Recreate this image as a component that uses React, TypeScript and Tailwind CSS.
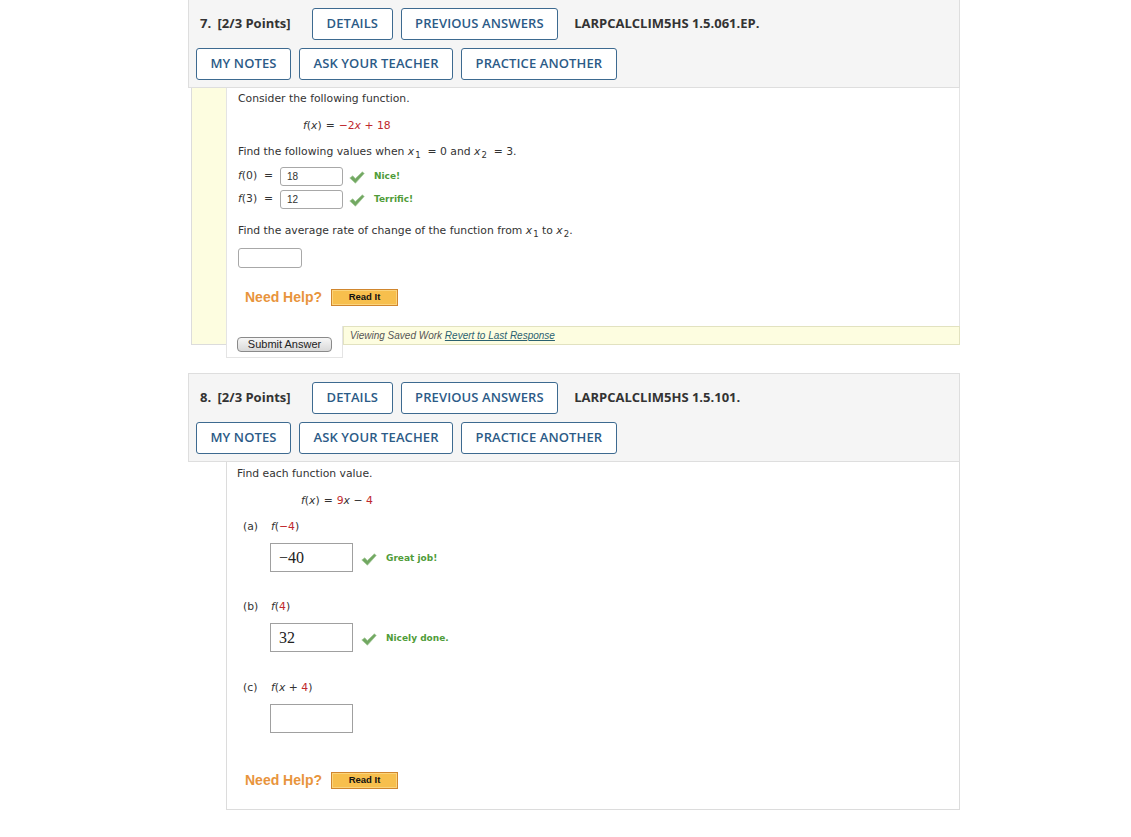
import React from "react";

const hdrFont = { fontFamily: '"Open Sans", "Liberation Sans", sans-serif' };

function Btn({ children }: { children: React.ReactNode }) {
  return (
    <div className="h-[32px] px-[13.5px] flex items-center border-[1.5px] border-[#3d6a90] rounded-[3px] bg-white text-[#2c5b87] text-[13px] font-semibold tracking-[0.1px]">
      {children}
    </div>
  );
}

function Header({ num, code, top }: { num: string; code: string; top?: boolean }) {
  return (
    <div
      className={`ml-[188px] w-[772px] bg-[#f5f5f5] border border-[#dedede] ${top ? "border-t-0 pt-[8px]" : "pt-[8px]"} pb-[7px]`}
      style={hdrFont}
    >
      <div className="flex items-center h-[32px]">
        <div className="w-[123px] pl-[11px] text-[13px] font-bold text-[#333]">
          {num}. <span className="ml-[3px]">[2/3 Points]</span>
        </div>
        <Btn>DETAILS</Btn>
        <div className="w-[8px]" />
        <Btn>PREVIOUS ANSWERS</Btn>
        <div className="ml-[16px] text-[13px] font-bold text-[#333]">{code}</div>
      </div>
      <div className="flex items-center h-[32px] mt-[8px] pl-[7px] gap-[8px]">
        <Btn>MY NOTES</Btn>
        <Btn>ASK YOUR TEACHER</Btn>
        <Btn>PRACTICE ANOTHER</Btn>
      </div>
    </div>
  );
}

function Check() {
  return (
    <svg width="16" height="13" viewBox="0 0 16 13">
      <path d="M0.8 7 L3.8 4.8 L6.3 7.6 L13.4 0.8 L15.2 2.6 L6.4 12.2 Z" fill="#72a862" stroke="#a2c896" strokeWidth="0.7" />
    </svg>
  );
}

const red = "text-[#c0282d]";

function NeedHelp({ ml }: { ml: string }) {
  return (
    <div className={`flex items-center h-[18px] ${ml}`}>
      <span className="text-[14px] font-bold text-[#e8943c]" style={{ fontFamily: '"Liberation Sans", Arial, sans-serif' }}>
        Need Help?
      </span>
      <div
        className="ml-[9px] w-[67px] h-[17px] flex items-center justify-center bg-[#f7bf4d] border border-[#d0862e] shadow-[inset_0_0_0_1px_#fbd47c] text-[9.5px] font-bold text-[#111]"
        style={{ fontFamily: '"Liberation Sans", Arial, sans-serif' }}
      >
        Read It
      </div>
    </div>
  );
}

const bodyFont = { fontFamily: '"DejaVu Sans", Verdana, sans-serif' };

function Sub({ children }: { children: React.ReactNode }) {
  return <span className="inline-block text-[8.5px] translate-y-[3px] ml-[1px]">{children}</span>;
}

export default function App() {
  return (
    <div className="w-[1131px] h-[837px] bg-white overflow-hidden">
      <Header num="7" code="LARPCALCLIM5HS 1.5.061.EP." top />
      {/* Q7 body */}
      <div className="ml-[191px] w-[769px] flex items-start text-[10.8px] text-[#333]" style={bodyFont}>
        <div className="w-[35px] h-[257px] bg-[#fdfde0] border-l border-b border-[#dcdcdc]" />
        <div className="flex-1">
          <div className="h-[238px] bg-white border-l border-r border-[#e4e4e4] pl-[11px] pt-[4px]">
            <div className="h-[14px] flex items-center">Consider the following function.</div>
            <div className="h-[14px] flex items-center mt-[13px] ml-[65px] whitespace-pre">
              <i>f</i>(<i>x</i>)<span className="px-[4px]">=</span><span className={red}>−2<i>x</i> + 18</span>
            </div>
            <div className="h-[14px] flex items-center mt-[12px] whitespace-pre">
              Find the following values when <i>x</i><Sub>1</Sub>{"  = 0 and "}<i>x</i><Sub>2</Sub>{"  = 3."}
            </div>
            {[
              ["0", "18", "Nice!", "mt-[8px]"],
              ["3", "12", "Terrific!", "mt-[4px]"],
            ].map(([a, v, fb, mt]) => (
              <div key={a} className={`h-[19px] flex items-center ${mt}`}>
                <span className="w-[42px] whitespace-pre">
                  <i>f</i>({a}){"  ="}
                </span>
                <div
                  className="w-[63px] h-[19px] border border-[#a8a8a8] rounded-[3px] flex items-center pl-[6px] text-[10px] text-[#333]"
                  style={{ fontFamily: '"Liberation Sans", Arial, sans-serif' }}
                >
                  {v}
                </div>
                <div className="ml-[6px] mt-[1px]">
                  <Check />
                </div>
                <span className="ml-[9px] font-bold text-[9px] text-[#4f9c39]">{fb}</span>
              </div>
            ))}
            <div className="h-[14px] flex items-center mt-[15px] whitespace-pre">
              Find the average rate of change of the function from <i>x</i><Sub>1</Sub> to <i>x</i><Sub>2</Sub>.
            </div>
            <div className="mt-[10px] w-[64px] h-[20px] border border-[#a8a8a8] rounded-[3px]" />
            <div className="mt-[20px]">
              <NeedHelp ml="ml-[7px]" />
            </div>
          </div>
          <div className="flex items-start">
            <div className="w-[117px] h-[32px] bg-white border-l border-r border-b border-[#e4e4e4] pl-[10px] pt-[11px]">
              <div
                className="w-[95px] h-[15px] rounded-[4px] border border-[#8a8a8a] bg-gradient-to-b from-[#f6f6f6] to-[#d9d9d9] flex items-center justify-center text-[11px] text-[#222]"
                style={{ fontFamily: '"Liberation Sans", Arial, sans-serif' }}
              >
                Submit Answer
              </div>
            </div>
            <div
              className="flex-1 h-[19px] bg-[#fdfde0] border border-[#e2e2c0] flex items-center pl-[6px] text-[10px] italic text-[#555]"
              style={{ fontFamily: '"Liberation Sans", Arial, sans-serif' }}
            >
              Viewing Saved Work&nbsp;<span className="underline text-[#2b6170]">Revert to Last Response</span>
            </div>
          </div>
        </div>
      </div>

      <div className="mt-[15px]">
        <Header num="8" code="LARPCALCLIM5HS 1.5.101." />
      </div>
      {/* Q8 body */}
      <div
        className="ml-[226px] w-[734px] h-[348px] bg-white border-l border-r border-b border-[#dcdcdc] pl-[10px] pt-[5px] text-[10.8px] text-[#333]"
        style={bodyFont}
      >
        <div className="h-[14px] flex items-center">Find each function value.</div>
        <div className="h-[14px] flex items-center mt-[13px] ml-[64px] whitespace-pre">
          <i>f</i>(<i>x</i>)<span className="px-[4px]">=</span><span className={red}>9</span><i>x</i>{" − "}<span className={red}>4</span>
        </div>
        {[
          { lbl: "(a)", arg: <><span>(</span><span className={red}>−4</span><span>)</span></>, val: "−40", fb: "Great job!", mt: "mt-[12px]" },
          { lbl: "(b)", arg: <><span>(</span><span className={red}>4</span><span>)</span></>, val: "32", fb: "Nicely done.", mt: "mt-[28px]" },
          { lbl: "(c)", arg: <><span>(</span><i>x</i>{" + "}<span className={red}>4</span><span>)</span></>, val: "", fb: "", mt: "mt-[29px]" },
        ].map((p) => (
          <div key={p.lbl} className={p.mt}>
            <div className="h-[14px] flex items-center ml-[6px] whitespace-pre">
              <span className="w-[28px]">{p.lbl}</span>
              <i>f</i>
              {p.arg}
            </div>
            <div className="mt-[9px] ml-[33px] flex items-center h-[29px]">
              <div
                className="w-[83px] h-[29px] border border-[#a0a0a0] flex items-center pl-[8px] text-[16px] text-[#222]"
                style={{ fontFamily: '"Liberation Serif", "Times New Roman", serif' }}
              >
                {p.val}
              </div>
              {p.fb && (
                <>
                  <div className="ml-[8px] mt-[3px]">
                    <Check />
                  </div>
                  <span className="ml-[9px] mt-[3px] font-bold text-[9px] text-[#4f9c39]">{p.fb}</span>
                </>
              )}
            </div>
          </div>
        ))}
        <div className="mt-[38px]">
          <NeedHelp ml="ml-[8px]" />
        </div>
      </div>
    </div>
  );
}
